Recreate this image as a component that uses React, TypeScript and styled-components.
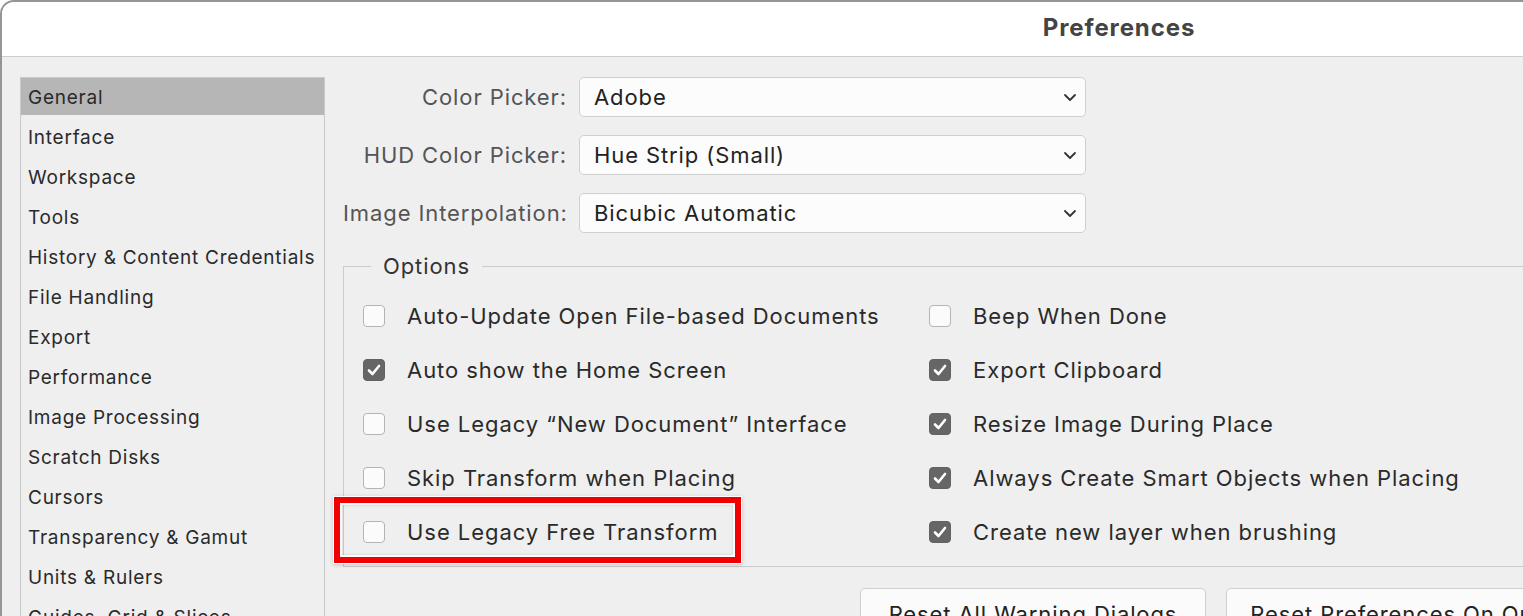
import React from "react";
import styled, { createGlobalStyle } from "styled-components";

const font = `Inter, "Liberation Sans", Arial, sans-serif`;

const GlobalStyle = createGlobalStyle`
  html, body {
    margin: 0;
    padding: 0;
    background: #ffffff;
    overflow: hidden;
  }
  body {
    font-family: ${font};
    -webkit-font-smoothing: antialiased;
  }
`;

const Window = styled.div`
  width: 2236px;
  height: 616px;
  box-sizing: border-box;
  border-top: 2px solid #959595;
  border-left: 2px solid #959595;
  border-top-left-radius: 14px;
  background: #efefef;
  overflow: hidden;
  display: flex;
  flex-direction: column;
`;

const TitleBar = styled.header`
  height: 55px;
  flex: none;
  box-sizing: border-box;
  padding-bottom: 3px;
  background: #ffffff;
  border-bottom: 1px solid #cdcdcd;
  display: flex;
  align-items: center;
  justify-content: center;
`;

const Title = styled.h1`
  margin: 0;
  font-size: 24px;
  font-weight: 700;
  color: #444444;
  letter-spacing: 0.9px;
`;

const Body = styled.div`
  flex: 1;
  display: flex;
  align-items: flex-start;
  padding: 20px 0 0 18px;
`;

const Sidebar = styled.ul`
  list-style: none;
  margin: 0;
  padding: 0;
  width: 303px;
  height: 600px;
  flex: none;
  border: 1px solid #c9c9c9;
  background: #efefef;
`;

const SideItem = styled.li<{ $active?: boolean }>`
  height: 40px;
  display: flex;
  align-items: center;
  padding: 2px 0 0 7px;
  font-size: 19px;
  letter-spacing: 0.75px;
  color: #2a2a2a;
  background: ${(p) => (p.$active ? "#b6b6b6" : "transparent")};
  border-bottom: 3px solid transparent;
  background-clip: padding-box;
  box-sizing: border-box;
  white-space: nowrap;
`;

const Main = styled.div`
  flex: 1;
  margin-left: 18px;
  display: flex;
  flex-direction: column;
`;

const FormGrid = styled.div`
  display: grid;
  grid-template-columns: 224px 507px;
  column-gap: 12px;
  row-gap: 18px;
  align-items: center;
`;

const FieldLabel = styled.label`
  text-align: right;
  font-size: 22px;
  letter-spacing: 0.9px;
  color: #555555;
  white-space: nowrap;
`;

const Select = styled.div`
  height: 40px;
  box-sizing: border-box;
  border: 1px solid #cfcfcf;
  border-radius: 5px;
  background: #fcfcfc;
  display: flex;
  align-items: center;
  justify-content: space-between;
  padding: 0 8px 0 14px;
  font-size: 22px;
  letter-spacing: 0.9px;
  color: #222222;
`;

const Options = styled.fieldset`
  margin: 21px 0 0 0;
  padding: 11px 0 7px 19px;
  border: 1px solid #cbcbcb;
  border-right: none;
  min-width: 0;
`;

const Legend = styled.legend`
  margin-left: 8px;
  padding: 0 12px;
  font-size: 22px;
  line-height: 24px;
  letter-spacing: 0.9px;
  color: #333333;
`;

const CheckGrid = styled.div`
  display: grid;
  grid-template-columns: 566px auto;
  grid-auto-rows: 54px;
`;

const CheckItem = styled.div`
  position: relative;
  display: flex;
  align-items: center;
  gap: 22px;
  font-size: 22px;
  letter-spacing: 0.95px;
  color: #2a2a2a;
  white-space: nowrap;
`;

const Box = styled.span<{ $checked?: boolean }>`
  width: 22px;
  height: 22px;
  flex: none;
  box-sizing: border-box;
  border-radius: 4px;
  border: 1px solid ${(p) => (p.$checked ? "#626262" : "#b4b4b4")};
  background: ${(p) => (p.$checked ? "#666666" : "#fbfbfb")};
  display: flex;
  align-items: center;
  justify-content: center;
`;

const Highlight = styled.div`
  position: absolute;
  left: -29px;
  top: -8px;
  width: 407px;
  height: 66px;
  box-sizing: border-box;
  border: 6px solid #f00000;
  box-shadow: 0 0 0 1px #ffffff, 0 1px 4px 1px rgba(0, 0, 0, 0.18),
    inset 0 0 0 2px #fafafa, inset 0 0 2px 3px rgba(0, 0, 0, 0.08);
  pointer-events: none;
`;

const ButtonRow = styled.div`
  display: flex;
  gap: 20px;
  margin: 21px 0 0 517px;
`;

const Button = styled.button`
  width: 346px;
  height: 42px;
  flex: none;
  box-sizing: border-box;
  border: 1px solid #cfcfcf;
  border-radius: 5px;
  background: #fbfbfb;
  font-family: ${font};
  font-size: 22px;
  letter-spacing: 0.9px;
  color: #222222;
  padding: 12px 0 0;
  display: flex;
  justify-content: center;
  align-items: flex-start;
  white-space: nowrap;
`;

const Chevron = () => (
  <svg width="14" height="9" viewBox="0 0 14 9" fill="none">
    <path d="M2 2 L7 7 L12 2" stroke="#333" strokeWidth="1.8" strokeLinecap="round" strokeLinejoin="round" />
  </svg>
);

const Check = () => (
  <svg width="14" height="12" viewBox="0 0 14 12" fill="none">
    <path d="M2 6.5 L5.5 10 L12 2" stroke="#fff" strokeWidth="2.6" strokeLinecap="round" strokeLinejoin="round" />
  </svg>
);

const sideItems = [
  "General",
  "Interface",
  "Workspace",
  "Tools",
  "History & Content Credentials",
  "File Handling",
  "Export",
  "Performance",
  "Image Processing",
  "Scratch Disks",
  "Cursors",
  "Transparency & Gamut",
  "Units & Rulers",
  "Guides, Grid & Slices",
  "Plugins",
];

const fields = [
  { label: "Color Picker:", value: "Adobe" },
  { label: "HUD Color Picker:", value: "Hue Strip (Small)" },
  { label: "Image Interpolation:", value: "Bicubic Automatic" },
];

type Opt = { text: string; checked: boolean; marked?: boolean };

const options: Opt[] = [
  { text: "Auto-Update Open File-based Documents", checked: false },
  { text: "Beep When Done", checked: false },
  { text: "Auto show the Home Screen", checked: true },
  { text: "Export Clipboard", checked: true },
  { text: "Use Legacy \u201cNew Document\u201d Interface", checked: false },
  { text: "Resize Image During Place", checked: true },
  { text: "Skip Transform when Placing", checked: false },
  { text: "Always Create Smart Objects when Placing", checked: true },
  { text: "Use Legacy Free Transform", checked: false, marked: true },
  { text: "Create new layer when brushing", checked: true },
];

export default function App() {
  return (
    <>
      <GlobalStyle />
      <Window>
        <TitleBar>
          <Title>Preferences</Title>
        </TitleBar>
        <Body>
          <Sidebar>
            {sideItems.map((item, i) => (
              <SideItem key={item} $active={i === 0}>
                {item}
              </SideItem>
            ))}
          </Sidebar>
          <Main>
            <FormGrid>
              {fields.map((f) => (
                <React.Fragment key={f.label}>
                  <FieldLabel>{f.label}</FieldLabel>
                  <Select>
                    <span>{f.value}</span>
                    <Chevron />
                  </Select>
                </React.Fragment>
              ))}
            </FormGrid>
            <Options>
              <Legend>Options</Legend>
              <CheckGrid>
                {options.map((o) => (
                  <CheckItem key={o.text}>
                    <Box $checked={o.checked}>{o.checked && <Check />}</Box>
                    {o.text}
                    {o.marked && <Highlight />}
                  </CheckItem>
                ))}
              </CheckGrid>
            </Options>
            <ButtonRow>
              <Button>Reset All Warning Dialogs</Button>
              <Button>Reset Preferences On Quit</Button>
            </ButtonRow>
          </Main>
        </Body>
      </Window>
    </>
  );
}
